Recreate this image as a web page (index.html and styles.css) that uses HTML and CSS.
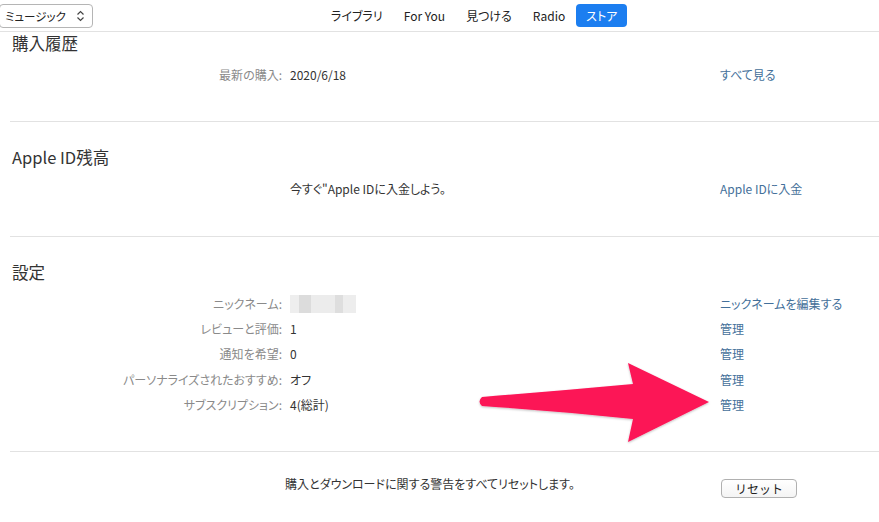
FILE: index.html
```html
<!DOCTYPE html>
<html lang="ja">

<head>
    <meta charset="UTF-8">
    <meta name="viewport" content="width=device-width, initial-scale=1.0">
    <title>アカウント情報</title>
    <link rel="stylesheet" href="styles.css">
</head>

<body>
    <div class="topbar">
        <div class="media-select">
            <span>ミュージック</span>
            <svg class="updown" width="9" height="12" viewBox="0 0 9 12">
                <path d="M1.5 4.5 L4.5 1.5 L7.5 4.5 M1.5 7.5 L4.5 10.5 L7.5 7.5" fill="none" stroke="#444" stroke-width="1.2" />
            </svg>
        </div>
        <nav class="tabs">
            <a class="tab">ライブラリ</a>
            <a class="tab">For You</a>
            <a class="tab">見つける</a>
            <a class="tab">Radio</a>
            <a class="tab active">ストア</a>
        </nav>
    </div>

    <div class="page">
        <section class="section first">
            <h2>購入履歴</h2>
            <div class="row">
                <span class="label">最新の購入:</span>
                <span class="value">2020/6/18</span>
                <a class="link">すべて見る</a>
            </div>
        </section>

        <section class="section">
            <h2>Apple ID残高</h2>
            <div class="row">
                <span class="label"></span>
                <span class="value">今すぐ"Apple IDに入金しよう。</span>
                <a class="link">Apple IDに入金</a>
            </div>
        </section>

        <section class="section">
            <h2>設定</h2>
            <div class="row">
                <span class="label">ニックネーム:</span>
                <span class="value"><span class="blurred"></span></span>
                <a class="link">ニックネームを編集する</a>
            </div>
            <div class="row">
                <span class="label">レビューと評価:</span>
                <span class="value">1</span>
                <a class="link">管理</a>
            </div>
            <div class="row">
                <span class="label">通知を希望:</span>
                <span class="value">0</span>
                <a class="link">管理</a>
            </div>
            <div class="row">
                <span class="label">パーソナライズされたおすすめ:</span>
                <span class="value">オフ</span>
                <a class="link">管理</a>
            </div>
            <div class="row">
                <span class="label">サブスクリプション:</span>
                <span class="value">4(総計)</span>
                <a class="link">管理</a>
            </div>
        </section>

        <section class="section last">
            <div class="row">
                <span class="label"></span>
                <span class="value reset-text">購入とダウンロードに関する警告をすべてリセットします。</span>
                <button class="reset">リセット</button>
            </div>
        </section>
    </div>

    <!-- 注目用の矢印 -->
    <svg class="arrow" width="240" height="90" viewBox="0 0 240 90">
        <defs>
            <filter id="shadow" x="-10%" y="-20%" width="120%" height="140%">
                <feDropShadow dx="0" dy="1" stdDeviation="1.2" flood-color="#000" flood-opacity="0.25" />
            </filter>
        </defs>
        <path d="M5 36 Q80 30 156 23 L151 2 L232 41 L151 81 L156 58 Q80 50 5 45 Q0 40.5 5 36 Z" fill="#fc1456" filter="url(#shadow)" />
    </svg>
</body>

</html>
```

FILE: styles.css
```css
/* ページ全体 */
body {
    margin: 0;
    background: #fff;
    font-family: "Noto Sans CJK JP", "Noto Sans", sans-serif;
    font-feature-settings: "palt";
    color: #333;
    position: relative;
    width: 879px;
    height: 522px;
    overflow: hidden;
}

/* 上部バー */
.topbar {
    display: flex;
    align-items: center;
    height: 32px;
    border-bottom: 1px solid #e2e2e2;
    box-sizing: border-box;
}

.media-select {
    display: flex;
    align-items: center;
    justify-content: space-between;
    width: 94px;
    height: 24px;
    margin-left: -1px;
    padding: 0 7px 0 5px;
    box-sizing: border-box;
    border: 1px solid #b5b5b5;
    border-radius: 4px;
    font-size: 11.5px;
    white-space: nowrap;
    color: #222;
}

.tabs {
    display: flex;
    gap: 1px;
    margin-left: 228px;
}

.tab {
    padding: 0 10px;
    height: 23px;
    line-height: 23px;
    font-size: 12px;
    color: #222;
    border-radius: 4px;
}

.tab.active {
    background: #1c7ef0;
    color: #fff;
}

/* セクション */
.section {
    margin-left: 10px;
    padding: 24px 0 34px;
    border-bottom: 1px solid #e2e2e2;
}

.section.first {
    padding-top: 0;
}

.section.last {
    border-bottom: none;
    padding-top: 18px;
}

h2 {
    margin: 0 0 8px 2px;
    font-size: 16.5px;
    font-weight: normal;
    line-height: 22px;
    color: #333;
}

.row {
    display: grid;
    grid-template-columns: 272px 430px auto;
    column-gap: 8px;
    height: 25.3px;
    align-items: center;
    font-size: 12px;
}

.label {
    text-align: right;
    color: #8a8a8a;
}

.value {
    color: #333;
}

.reset-text {
    margin-left: -5px;
}

.link {
    color: #44709a;
    margin-left: -8px;
}

.blurred {
    display: inline-block;
    width: 66px;
    height: 18px;
    vertical-align: middle;
    background: linear-gradient(90deg, #eee 0 14%, #dcdcdc 14% 32%, #ececec 32% 68%, #dedede 68% 80%, #ededed 80%);
}

.reset {
    justify-self: start;
    align-self: start;
    margin: 8.5px 0 0 -7px;
    width: 76px;
    height: 19px;
    padding: 0;
    font-family: inherit;
    font-size: 12px;
    color: #222;
    background: linear-gradient(#fff, #f4f4f4);
    border: 1px solid #b0b0b0;
    border-radius: 4px;
}

/* 矢印 */
.arrow {
    position: absolute;
    left: 477px;
    top: 361px;
}
```
